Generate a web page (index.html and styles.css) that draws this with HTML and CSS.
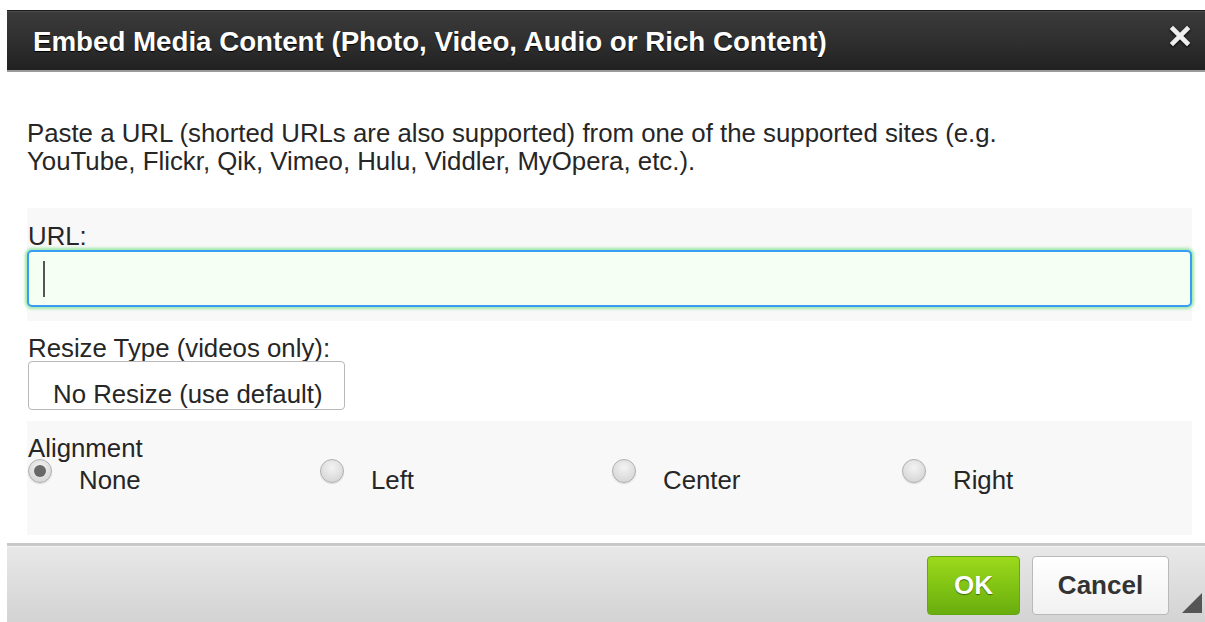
FILE: index.html
```html
<!DOCTYPE html>
<html>
<head>
<meta charset="utf-8">
<title>Embed Media Content</title>
<link rel="stylesheet" href="styles.css">
</head>
<body>
<div class="dialog">
  <div class="titlebar">
    <span class="title">Embed Media Content (Photo, Video, Audio or Rich Content)</span>
    <span class="close" aria-label="Close">
      <svg width="22" height="22" viewBox="0 0 22 22"><path d="M4 4 L18 18 M18 4 L4 18" stroke="#eeeeee" stroke-width="4.6" stroke-linecap="square" fill="none"/></svg>
    </span>
  </div>
  <div class="content">
    <p class="intro">Paste a URL (shorted URLs are also supported) from one of the supported sites (e.g.<br>YouTube, Flickr, Qik, Vimeo, Hulu, Viddler, MyOpera, etc.).</p>
    <div class="row shaded url">
      <label class="label">URL:</label>
      <div class="input"><span class="caret"></span></div>
    </div>
    <div class="row resize">
      <label class="label">Resize Type (videos only):</label>
      <div class="select">No Resize (use default)</div>
    </div>
    <div class="row shaded align">
      <div class="label">Alignment</div>
      <div class="radios">
        <div class="radio"><span class="dot checked"></span><span class="radio-text">None</span></div>
        <div class="radio"><span class="dot"></span><span class="radio-text">Left</span></div>
        <div class="radio"><span class="dot"></span><span class="radio-text">Center</span></div>
        <div class="radio"><span class="dot"></span><span class="radio-text">Right</span></div>
      </div>
    </div>
  </div>
  <div class="footer">
    <button class="btn ok">OK</button>
    <button class="btn cancel">Cancel</button>
    <span class="grip"></span>
  </div>
</div>
</body>
</html>
```

FILE: styles.css
```css
html, body {
  margin: 0;
  padding: 0;
  background: #ffffff;
  overflow: hidden;
}

body {
  font-family: "Liberation Sans", Arial, sans-serif;
  color: #262626;
}

.dialog {
  margin: 10px 0 0 7px;
  width: 1198px;
  height: 612px;
  display: flex;
  flex-direction: column;
  background: #ffffff;
}

/* dark title bar */
.titlebar {
  height: 59px;
  flex: none;
  display: flex;
  align-items: center;
  justify-content: space-between;
  padding: 0 14px 0 26px;
  background: linear-gradient(#3b3b3b, #2d2d2d 60%, #212121);
  border-top: 1px solid #1a1a1a;
  box-shadow: inset 0 1px 0 #4b4b4b;
  border-bottom: 2px solid #9a9a9a;
}

.title {
  color: #ffffff;
  font-weight: bold;
  font-size: 27.7px;
  line-height: 32px;
  text-shadow: 0 1px 1px #000000;
  padding-top: 2px;
}

.close {
  display: flex;
  width: 22px;
  height: 22px;
  margin-top: -10px;
  filter: drop-shadow(0 1px 1px #000);
}

/* form body */
.content {
  flex: 1;
  min-height: 0;
  padding: 0 13px 0 20px;
  font-size: 25.8px;
  line-height: 28px;
}

.intro {
  margin: 47px 0 33px 0;
}

.row {
  display: flex;
  flex-direction: column;
}

.row.shaded {
  background: #f8f8f8;
}

.label {
  padding-left: 1px;
}

.row.url {
  padding: 14px 0 14px 0;
}

.input {
  height: 53px;
  border: 2px solid #3b9cf3;
  border-radius: 5px;
  background: #f5fff4;
  box-shadow: 0 0 3px 2px #9ee8a8;
  display: flex;
  align-items: center;
  padding-left: 14px;
}

.caret {
  width: 2px;
  height: 36px;
  background: #555555;
}

.row.resize {
  padding: 13px 0 11px 0;
}

.select {
  margin: -1px 0 0 1px;
  width: 317px;
  height: 49px;
  box-sizing: border-box;
  border: 1px solid #b8b8b8;
  border-radius: 4px;
  background: #ffffff;
  padding: 18px 0 0 24px;
}

.row.align {
  padding: 13px 0 41px 0;
}

.radios {
  display: grid;
  grid-template-columns: 292px 292px 290px 290px;
}

.radio {
  display: flex;
  align-items: flex-start;
  gap: 27px;
  padding-left: 1px;
}

.radio-text {
  padding-top: 4px;
}

.dot {
  width: 22px;
  height: 22px;
  margin-top: -3px;
  border-radius: 50%;
  border: 1px solid #b0b0b0;
  background: radial-gradient(circle at 50% 35%, #f3f3f3, #d8d8d8 75%);
  box-shadow: 0 1px 1px rgba(0, 0, 0, 0.12);
  position: relative;
  flex: none;
}

.dot.checked::after {
  content: "";
  position: absolute;
  left: 5px;
  top: 5px;
  width: 12px;
  height: 12px;
  border-radius: 50%;
  background: #686868;
}

/* button bar */
.footer {
  flex: none;
  box-sizing: border-box;
  height: 79px;
  margin-top: 8px;
  border-top: 3px solid #c8c8c8;
  box-shadow: inset 0 1px 0 #f4f4f4;
  background: linear-gradient(#e8e8e8, #d3d3d3);
  display: flex;
  align-items: flex-start;
  justify-content: flex-end;
  gap: 12px;
  padding: 10px 36px 0 0;
  position: relative;
}

.btn {
  height: 59px;
  border-radius: 4px;
  font-family: "Liberation Sans", Arial, sans-serif;
  font-weight: bold;
  font-size: 26px;
  padding: 0;
  cursor: pointer;
}

.btn.ok {
  width: 93px;
  color: #ffffff;
  border: 1px solid #62a810;
  background: linear-gradient(#9cd91c, #82c414 50%, #69ad0e);
  text-shadow: 0 1px 1px #3b6b05;
}

.btn.cancel {
  width: 137px;
  color: #333333;
  border: 1px solid #b9b9b9;
  background: linear-gradient(#ffffff, #f1f1f1);
}

/* resize grip in the lower right corner */
.grip {
  position: absolute;
  right: 3px;
  bottom: 9px;
  width: 0;
  height: 0;
  border-left: 20px solid transparent;
  border-bottom: 20px solid #555555;
}
```
